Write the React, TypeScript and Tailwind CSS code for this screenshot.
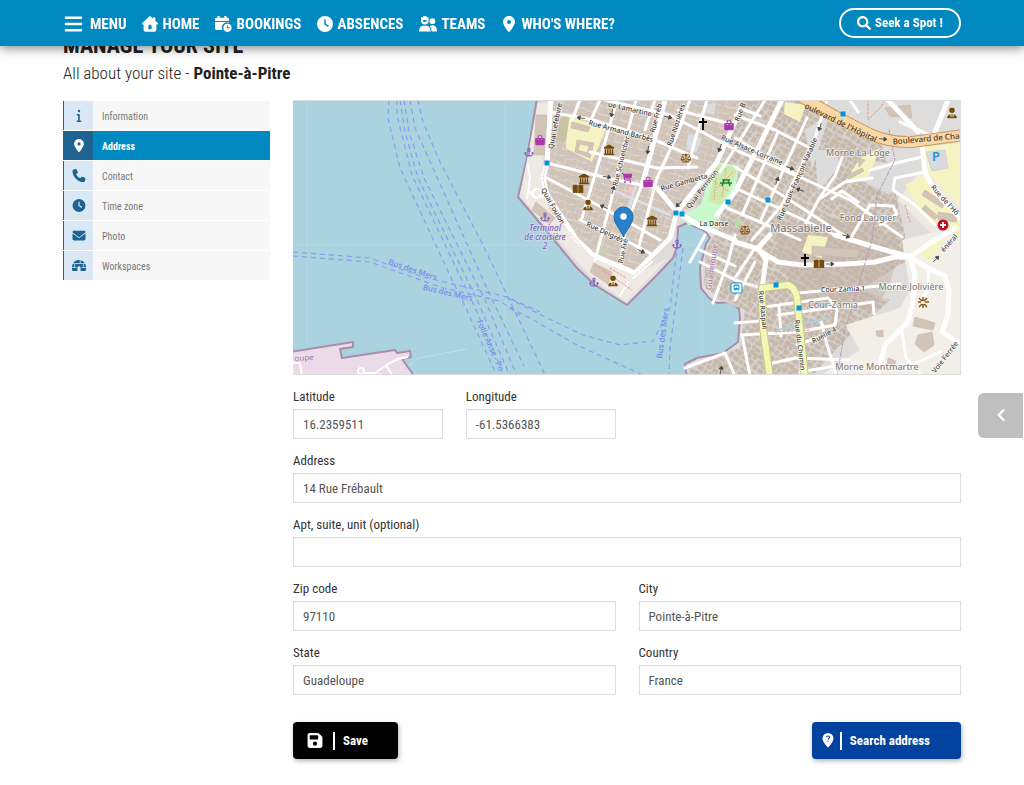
import React, { useState } from 'react'
import type { IconType } from 'react-icons'
import { FaChevronLeft, FaSearch } from 'react-icons/fa'
import {
  FaAnchor,
  FaBagShopping,
  FaBars,
  FaBookOpen,
  FaBus,
  FaCartShopping,
  FaClock,
  FaEnvelope,
  FaFloppyDisk,
  FaIgloo,
  FaInfo,
  FaLandmark,
  FaLocationDot,
  FaPhone,
  FaScaleBalanced,
  FaUserTie,
} from 'react-icons/fa6'

// ---------- custom icons ----------

const HomeIcon = () => (
  <svg viewBox="0 0 16 16" className="h-4 w-4" fill="currentColor" fillRule="evenodd">
    <path d="M7.3.4a1 1 0 0 1 1.4 0L11 2.500V1.500h2.400v3.200l2.300 2.200c.6.600.2 1.700-.7 1.700h-.6v5.400a1.800 1.800 0 0 1-1.800 1.800H3.400A1.800 1.800 0 0 1 1.600 14V8.600H1c-.9 0-1.300-1.100-.7-1.700zM6.400 13.200h3.200V10.200a1.600 1.600 0 0 0-3.200 0z" />
  </svg>
)

const BookingIcon = () => (
  <svg viewBox="0 0 17 16" className="h-4 w-[17px]" fill="currentColor">
    <path d="M2.500 0h2.200v1.800h4.600V0h2.200v1.800H13a1 1 0 0 1 1 1V5H0V2.800a1 1 0 0 1 1-1h1.500z" />
    <path d="M0 6h14v.9a5 5 0 0 0-6.400 7.100H1.500A1.500 1.500 0 0 1 0 12.500z" />
    <path
      fillRule="evenodd"
      d="M12.500 7.700a4.100 4.100 0 1 1 0 8.200 4.100 4.100 0 0 1 0-8.200zM12 9.400v2.900h2.800v-1H13V9.400z"
    />
  </svg>
)

const TeamsIcon = () => (
  <svg viewBox="0 0 18 16" className="h-4 w-[18px]" fill="currentColor">
    <path d="M2 1l1.200.5L4.500 0h2.600l1.300 1.500L9.600 1v3.800a3.800 3.800 0 0 1-7.600 0z" />
    <path d="M3.800 4h4a2 2 0 0 1-4 0z" fill="#0088c0" />
    <path d="M0 15.500c0-3.600 2-5.700 4-5.700h3.600c2.200 0 4 2.100 4 5.700z" />
    <circle cx="13.400" cy="5.200" r="2.900" />
    <path d="M12.600 15.500c0-2.600-.6-4.200-1.700-5.300.7-.7 1.600-.9 2.600-.9 2.700 0 4.500 2 4.500 6.200z" />
  </svg>
)

const SearchPinIcon = () => (
  <svg viewBox="0 0 12 16" className="h-[15px] w-3" fill="none">
    <path d="M6 0a5.800 5.800 0 0 1 5.800 5.800C11.800 9.300 8 13.500 6 15.500 4 13.500.2 9.300.2 5.800A5.800 5.800 0 0 1 6 0z" fill="#fff" />
    <path d="M4.400 4.600c0-1 .7-1.500 1.600-1.500s1.700.5 1.700 1.500c0 1.100-1.600 1.200-1.600 2.500M6.100 8.300v1" stroke="#00429d" strokeWidth="1.100" />
  </svg>
)

// ---------- data ----------

const navItems = [
  { label: 'HOME', icon: <HomeIcon /> },
  { label: 'BOOKINGS', icon: <BookingIcon /> },
  { label: 'ABSENCES', icon: <FaClock className="h-4 w-4" /> },
  { label: 'TEAMS', icon: <TeamsIcon /> },
  { label: "WHO'S WHERE?", icon: <FaLocationDot className="h-4 w-4" /> },
]

const sections: { label: string; icon: IconType }[] = [
  { label: 'Information', icon: FaInfo },
  { label: 'Address', icon: FaLocationDot },
  { label: 'Contact', icon: FaPhone },
  { label: 'Time zone', icon: FaClock },
  { label: 'Photo', icon: FaEnvelope },
  { label: 'Workspaces', icon: FaIgloo },
]

const ferryLines = [
  'M389 100L388 118L400 168L453 282L463 302L497 376',
  'M397 100L397 115L412 175L450 255L477 312L504 376',
  'M400 100L405 132L418 178L477 300L510 376',
  'M404 100L409 132L424 178L485 300L517 376',
  'M410 100L415 128L457 222L490 295L524 366',
  'M418 100L423 122L440 162L483 245L507 295L520 322L545 375',
  'M293 252L370 258L423 277L507 297L540 312',
  'M293 256L370 262L440 287L500 301L520 315',
  'M508 298L545 317L583 335L620 345L653 341L670 308L677 247',
  'M510 307L577 345L645 376',
  'M683 248L675 310L670 348L669 376',
]

const wideRoads = [
  'M551 100L547 163L543 178L547 195L577 240L593 255L635 273L670 238L677 212L657 188L643 182',
  'M665 100L643 182',
  'M782 100L758 148L735 192L717 215',
  'M741 108L717 162L677 212',
  'M735 242L755 248L778 262L802 265L845 264L875 262L895 257L910 257',
  'M835 235L878 248L910 257L932 242L955 228',
  'M922 145L925 172L935 192L962 220',
  'M888 100L918 132',
  'M948 100L935 132',
  'M910 257L915 275L913 302L908 322L885 345L877 376',
  'M910 257L928 268L945 276L949 290L948 315L942 332L962 345',
  'M762 288L766 260L758 248L770 235',
  'M677 212L700 226L735 240',
]

const roads = [
  'M617 100L607 135L582 218',
  'M636 100L620 162L610 205L595 260',
  'M643 182L625 228L620 268',
  'M690 100L677 135L657 178L638 250',
  'M707 100L695 140L688 168',
  'M580 100L572 120',
  'M600 100L590 122',
  'M550 112L593 120L650 138L697 158',
  'M605 100L670 115L717 140L740 152L802 178',
  'M547 163L607 178L657 188',
  'M590 152L657 168L697 167',
  'M547 178L603 208L660 240',
  'M580 220L625 240L653 255',
  'M655 100L645 130',
  'M678 110L730 124',
  'M765 100L740 140L720 172',
  'M827 100L815 138L782 205L752 240',
  'M807 118L787 162L760 222',
  'M778 132L742 215',
  'M735 115L775 130L808 147',
  'M735 138L802 178L850 200L902 237',
  'M735 167L782 195L848 238',
  'M735 188L770 204L835 235',
  'M727 208L760 222L800 240',
  'M820 197L835 176L842 158',
  'M821 198L845 182L872 178',
  'M832 199L842 191L858 202',
  'M852 236L870 205L893 206L897 214L880 225',
  'M820 197L805 225',
  'M922 157L900 162L870 170',
  'M925 172L895 178L893 190L915 205L935 225',
  'M700 262L735 280L762 288',
  'M735 278L755 248',
  'M735 300L755 262',
  'M765 307L828 298',
  'M778 315L873 302L874 314',
  'M798 293L868 287L900 284',
  'M742 335L798 332L835 325L837 310L830 300',
  'M779 307L781 336',
  'M797 345L822 336',
  'M821 320L827 345L837 376',
  'M742 335L750 376',
  'M735 323L760 321',
  'M765 365L795 358L850 360',
  'M800 372L835 366',
  'M902 332L906 358L922 376',
  'M910 366L940 352',
  'M928 268L929 290L920 300',
  'M685 368L725 353L735 376',
  'M713 303L728 262L735 235',
  'M705 235L690 262',
  'M700 250L735 266',
  'M740 108L760 116',
  'M900 122L930 135',
  'M850 100L858 112',
]

const labelKinds = {
  street: { fontSize: 7, fill: '#3f3c3a', stroke: '#fff' },
  major: { fontSize: 8, fill: '#4a3a26', stroke: '#fcd6a4' },
  place: { fontSize: 9, fill: '#85817e', stroke: '#fff' },
  suburb: { fontSize: 11, fill: '#85817e', stroke: '#fff' },
  ferry: { fontSize: 8, fill: '#7687ee', stroke: '#aad3df' },
  harbour: { fontSize: 8, fill: '#8461c4', stroke: '#dfe5ea' },
  region: { fontSize: 8, fill: '#a884ac', stroke: '#f2e8f0' },
}

const labels: { text: string; x: number; y: number; rotate: number; kind: keyof typeof labelKinds }[] = [
  { text: 'Quai Lefebvre', x: 555, y: 126, rotate: -79, kind: 'street' },
  { text: 'Rue Armand Barbès', x: 621, y: 131, rotate: 15, kind: 'street' },
  { text: 'ue Lamartine', x: 630, y: 109, rotate: 13, kind: 'street' },
  { text: 'Rue Schoelcher', x: 621, y: 161, rotate: -76, kind: 'street' },
  { text: 'Rue Fréb', x: 656, y: 118, rotate: -75, kind: 'street' },
  { text: 'Rue Nozières', x: 676, y: 125, rotate: -72, kind: 'street' },
  { text: 'Rue Gambetta', x: 684, y: 182, rotate: -16, kind: 'street' },
  { text: 'Quai Perrinon', x: 702, y: 189, rotate: -52, kind: 'street' },
  { text: 'Quai Foulon', x: 553, y: 206, rotate: 60, kind: 'street' },
  { text: 'Rue Delgrès', x: 605, y: 232, rotate: 25, kind: 'street' },
  { text: 'Rue Fré', x: 623, y: 251, rotate: -78, kind: 'street' },
  { text: 'La Darse', x: 714, y: 223, rotate: 0, kind: 'street' },
  { text: 'Rue Alsace-Lorraine', x: 752, y: 150, rotate: 23, kind: 'street' },
  { text: 'Rue Louis-François Vatable', x: 797, y: 179, rotate: -66, kind: 'street' },
  { text: "oulevard de l'Hôpital", x: 841, y: 122, rotate: 26, kind: 'major' },
  { text: 'Boulevard de Cha', x: 926, y: 138, rotate: -5, kind: 'major' },
  { text: "Rue de l'Hô", x: 945, y: 200, rotate: 48, kind: 'street' },
  { text: 'Rue Raspail', x: 763, y: 310, rotate: 84, kind: 'street' },
  { text: 'Rue du Chemin', x: 800, y: 345, rotate: 83, kind: 'street' },
  { text: 'Cour Zamia 1', x: 843, y: 289, rotate: -2, kind: 'street' },
  { text: 'Ruelle 4', x: 824, y: 335, rotate: -28, kind: 'street' },
  { text: 'Voie Ferrée', x: 945, y: 357, rotate: -52, kind: 'street' },
  { text: 'Rue B', x: 740, y: 112, rotate: -68, kind: 'street' },
  { text: 'énéral', x: 949, y: 243, rotate: -48, kind: 'street' },
  { text: 'Morne La Loge', x: 858, y: 152, rotate: 0, kind: 'place' },
  { text: 'Fond Laugier', x: 868, y: 217, rotate: 0, kind: 'place' },
  { text: 'Massabielle', x: 801, y: 227, rotate: 0, kind: 'suburb' },
  { text: 'Morne Jolivière', x: 911, y: 286, rotate: 0, kind: 'place' },
  { text: 'Cour-Zamia', x: 833, y: 304, rotate: 0, kind: 'place' },
  { text: 'Morne Montmartre', x: 877, y: 366, rotate: 0, kind: 'place' },
  { text: 'Bus des Mers', x: 413, y: 269, rotate: 19, kind: 'ferry' },
  { text: 'Bus des Mers', x: 448, y: 292, rotate: 13, kind: 'ferry' },
  { text: 'Folle Anse - Po', x: 491, y: 345, rotate: 66, kind: 'ferry' },
  { text: 'Bus des Mers', x: 662, y: 333, rotate: -82, kind: 'ferry' },
  { text: 'Terminal', x: 545, y: 227, rotate: 0, kind: 'harbour' },
  { text: 'de croisière', x: 545, y: 236, rotate: 0, kind: 'harbour' },
  { text: '2', x: 545, y: 245, rotate: 0, kind: 'harbour' },
  { text: 'Guadeloupe', x: 711, y: 267, rotate: -82, kind: 'region' },
  { text: 'oupe', x: 304, y: 357, rotate: -4, kind: 'region' },
]

const pois: { icon: IconType; x: number; y: number; size: number; color: string }[] = [
  { icon: FaBagShopping, x: 540, y: 140, size: 11, color: '#ac39ac' },
  { icon: FaBagShopping, x: 729, y: 125, size: 11, color: '#ac39ac' },
  { icon: FaBagShopping, x: 648, y: 182, size: 11, color: '#ac39ac' },
  { icon: FaCartShopping, x: 627, y: 178, size: 11, color: '#ac39ac' },
  { icon: FaAnchor, x: 529, y: 152, size: 10, color: '#8461c4' },
  { icon: FaAnchor, x: 545, y: 217, size: 10, color: '#8461c4' },
  { icon: FaAnchor, x: 594, y: 282, size: 10, color: '#8461c4' },
  { icon: FaAnchor, x: 677, y: 244, size: 10, color: '#8461c4' },
  { icon: FaLandmark, x: 609, y: 150, size: 11, color: '#734a08' },
  { icon: FaLandmark, x: 584, y: 179, size: 11, color: '#734a08' },
  { icon: FaLandmark, x: 652, y: 221, size: 11, color: '#734a08' },
  { icon: FaBookOpen, x: 578, y: 189, size: 11, color: '#734a08' },
  { icon: FaBookOpen, x: 819, y: 264, size: 11, color: '#734a08' },
  { icon: FaUserTie, x: 588, y: 205, size: 11, color: '#734a08' },
  { icon: FaUserTie, x: 613, y: 281, size: 11, color: '#734a08' },
  { icon: FaUserTie, x: 952, y: 113, size: 11, color: '#734a08' },
  { icon: FaScaleBalanced, x: 686, y: 158, size: 11, color: '#8a5a14' },
  { icon: FaScaleBalanced, x: 745, y: 230, size: 11, color: '#8a5a14' },
]

const churches = [
  [703, 124],
  [805, 260],
]

const stops = [
  [547, 163],
  [676, 213],
  [682, 214],
  [728, 202],
  [843, 114],
  [768, 200],
  [776, 285],
  [799, 308],
]

const arrows = [
  [581, 118, 188],
  [612, 113, 100],
  [607, 177, 8],
  [613, 190, -75],
  [604, 207, 205],
  [648, 150, 98],
  [668, 117, 12],
  [720, 148, 110],
  [679, 204, 140],
  [641, 251, 25],
  [820, 127, 110],
  [790, 168, 20],
  [777, 181, -70],
  [800, 190, 200],
  [846, 236, 20],
  [830, 264, 0],
  [936, 259, -45],
  [883, 139, 5],
  [721, 370, -80],
]

const landPath =
  'M537 98L527 158L518 197L550 235L577 268L595 285L627 305L657 275L673 258L677 247L678 227L687 223L705 231L710 238L706 244L700 268L701 288L709 298L717 303L732 302L739 309L740 318L738 342L723 353L697 358L685 364L687 378H964V98Z'
const southPath = 'M290 352L353 342L353 347L340 349L342 358L395 350L397 353L410 351L411 357L402 359L415 377H290Z'

// ---------- map ----------

function SiteMap() {
  return (
    <svg
      viewBox="293 101 667 273"
      className="block w-full border-y border-r border-[#dddddd]"
      role="img"
      aria-label="Map of Pointe-à-Pitre"
      fontFamily='"Noto Sans", sans-serif'
    >
      <defs>
        <pattern id="blocks" width="24" height="22" patternUnits="userSpaceOnUse" patternTransform="rotate(17)">
          <rect width="24" height="22" fill="#ddd5ce" />
          <path
            d="M0 0h5v6H0zM6 1h4v4H6zM11 0h6v7h-6zM18 1h5v4h-5zM1 8h6v4H1zM8 7h3v6H8zM13 9h5v4h-5zM19 7h4v6h-4zM0 14h4v7H0zM6 15h6v5H6zM13 14h4v6h-4zM18 15h5v6h-5z"
            fill="#d3c6bb"
            stroke="#c3b4a8"
            strokeWidth=".5"
          />
        </pattern>
        <pattern id="houses" width="27" height="25" patternUnits="userSpaceOnUse" patternTransform="rotate(28)">
          <rect width="27" height="25" fill="#d8d1cb" />
          <path
            d="M1 1h4v3H1zM6 0h3v5H6zM10 2h5v4h-5zM17 1h3v3h-3zM21 2h5v3h-5zM0 6h5v4H0zM7 7h4v3H7zM12 8h3v5h-3zM17 6h5v4h-5zM23 7h3v6h-3zM2 12h4v3H2zM7 12h4v5H7zM13 15h5v3h-5zM17 11h4v3h-4zM20 15h5v4h-5zM0 17h4v5H0zM6 19h5v4H6zM13 20h3v4h-3zM18 21h6v3h-6z"
            fill="#c8b9ad"
            stroke="#c0b0a4"
            strokeWidth=".6"
          />
        </pattern>
      </defs>

      <path d="M293 100h668v275H293z" fill="#aad3df" />
      <path d="M307 100V376M505 100V376M702 100V376M293 245H961" stroke="#b9dce6" strokeWidth=".7" />

      {/* land */}
      <path d={landPath} fill="#dfdddc" stroke="#a98dad" strokeWidth="2" strokeLinejoin="round" />
      <path d="M552 100L548 163L545 185L577 240L593 255L635 272L673 235L680 212L735 192L735 230L820 260V100Z" fill="url(#blocks)" />
      <path d="M538 103L520 196L552 233L595 281L627 302L668 258L635 275L590 256L550 210L541 180L549 103Z" fill="#eeeae3" />
      <path d="M735 100H805L882 145L895 190L905 235V262L860 290L890 300L868 320L845 340L812 376H690L688 366L740 348L745 310L720 300L704 285L706 250L720 225Z" fill="url(#houses)" />
      <path d="M775 225L850 218L900 240L890 285L875 310L800 300L780 262Z" fill="#c3b3a7" opacity=".5" />
      <path d="M805 130L830 113L812 170Z" fill="#dddcdc" />
      <path d="M815 150L835 150L840 165L818 192Z" fill="#dddcdc" />
      <path d="M868 160L900 165L890 195L860 180Z" fill="#dddcdc" />
      <path d="M902 240L961 225V376H820L860 350L845 325L900 308L910 290Z" fill="#f2efe9" />
      <path d="M898 200L925 165L961 190V235L930 232Z" fill="#efebe0" />

      {/* schools, hospital ground and parks */}
      <g fill="#f6f3c3">
        <path d="M565 116L607 127L592 162L566 148Z" />
        <path d="M922 147L960 143V205L930 175Z" />
        <path d="M905 185L925 175L960 220V240L925 215Z" />
        <path d="M860 158L880 148L868 178L845 182Z" />
        <path d="M785 102L806 105L800 122L784 114Z" />
        <path d="M808 235L828 237L822 258L802 252Z" />
        <path d="M912 250L945 238L930 262Z" />
      </g>
      <g fill="#d3c4b8" stroke="#c0aea1" strokeWidth=".5">
        <path d="M572 122L590 127L588 132L571 128Z" />
        <path d="M577 140L594 143L590 158L575 152ZM580 144L578 150L587 153L589 146Z" fillRule="evenodd" />
        <path d="M846 176L862 168L864 171L849 179Z" />
        <path d="M858 158L865 160L859 167Z" />
        <path d="M925 190L945 203L942 208L922 195Z" />
        <path d="M938 212L958 215L956 222L938 220Z" />
        <path d="M925 205L938 216L935 220L922 209Z" />
        <path d="M885 108L910 105L912 118L890 116Z" />
        <path d="M915 317L935 323L933 330L913 326Z" />
        <path d="M918 335L932 332L934 345L924 352L915 344Z" />
        <path d="M888 358L896 361L894 367L887 364ZM876 331L883 330L883 337L877 336Z" />
        <path d="M812 246L860 250L858 258L812 255Z" />
        <path d="M536 115H547L546 155H534Z" />
        <path d="M536 202L555 218L550 224L532 210Z" />
        <path d="M594 263L612 272L608 284L590 272Z" />
      </g>
      <path d="M560 120L570 113L566 142L556 140Z" fill="#c5c3a4" />
      <path d="M688 134L702 138L697 152L686 150Z" fill="#dcdce6" />
      <path d="M707 104L716 103L714 115L705 113Z" fill="#dcdcdc" />
      <path d="M926 152L945 150L948 168L932 171Z" fill="#d8dadf" stroke="#c5c8d2" strokeWidth=".6" />
      <path d="M717 162L739 166L735 190L722 212L712 227L688 225L682 216L700 206L708 183Z" fill="#c8facc" />
      <path d="M717 164L738 168L722 205L708 202Z" fill="#cdebb0" />
      <path d="M717 168L714 200M726 168L722 198M733 172L713 192M712 180L730 192" stroke="#f3a08d" strokeWidth="1" strokeDasharray="2 1" />
      <path d="M735 218L741 220L738 228H735Z" fill="#b8dfa2" />
      <path d="M629 186L636 188L633 196L628 194Z" fill="#f6c6bd" />
      <path d="M593 248L605 248L608 255L598 253Z" fill="#cdcfb3" />

      {/* streets */}
      <g fill="none" strokeLinejoin="round" strokeLinecap="round">
        <path d="M613 190L670 215M637 182L628 212" stroke="#dddde8" strokeWidth="3" />
        {roads.map(d => (
          <path key={d} d={d} stroke="#fff" strokeWidth="3" />
        ))}
        {wideRoads.map(d => (
          <path key={d} d={d} stroke="#fff" strokeWidth="5" />
        ))}
        <path d="M528 190L535 198L545 196M527 198L530 178L528 165M633 278L652 262M620 296L628 282" stroke="#fff" strokeWidth="2" />
        <circle cx="537" cy="193" r="4" stroke="#fff" strokeWidth="2" />
        <path d="M547 160L543 178L550 210L590 256M668 245L635 275M735 278L762 288M765 305L770 376" stroke="#e0aaa0" strokeWidth=".6" strokeDasharray="2 2" />
        <path d="M595 265L632 290M610 268L626 278M775 332L810 330M905 205L910 222M868 100L868 120L880 108L884 102" stroke="#fa8c7d" strokeWidth="1" strokeDasharray="2 2" />
        <path d="M778 330L828 318" stroke="#aad3df" strokeWidth="2" />
        <path d="M889 130L895 160L877 195L872 240L845 330L837 376" stroke="#b79cbb" strokeWidth="1" strokeDasharray="5 2 2 2" />
        <path d="M762 288L788 285Q795 287 797 298L805 378M762 288L763 328L770 378" stroke="#c5ca86" strokeWidth="8" />
        <path d="M762 288L788 285Q795 287 797 298L805 378M762 288L763 328L770 378" stroke="#f3f7b4" strokeWidth="6" />
        <path d="M800 96L835 116L870 134Q890 143 912 142L964 135" stroke="#c69a63" strokeWidth="12" />
        <path d="M800 96L835 116L870 134Q890 143 912 142L964 135" stroke="#fcd6a4" strokeWidth="10" />
      </g>

      {/* southern shore */}
      <path d={southPath} fill="#ebdbe8" stroke="#a98dad" strokeWidth="2" strokeLinejoin="round" />
      <g fill="none" stroke="#fff" strokeWidth="2">
        <circle cx="361" cy="371" r="3" />
        <path d="M364 373L375 373L388 364L398 359L408 357M386 365L393 376M293 363H300L302 376M378 374L384 376" />
      </g>
      <path d="M408 366L419 358L467 349" fill="none" stroke="#c5dde2" strokeWidth="1.200" />

      {/* ferry routes */}
      <g fill="none" stroke="#8a9cf0" strokeWidth="1.200" strokeDasharray="5 4">
        {ferryLines.map(d => (
          <path key={d} d={d} />
        ))}
      </g>

      {arrows.map(([x, y, angle]) => (
        <path
          key={`${x}-${y}`}
          d="M-4 0H2M1 -2L4 0L1 2Z"
          transform={`translate(${x} ${y}) rotate(${angle})`}
          stroke="#444"
          strokeWidth=".8"
          fill="#444"
        />
      ))}

      {stops.map(([x, y]) => (
        <rect key={`${x}-${y}`} x={x - 2.5} y={y - 2.5} width="5" height="5" fill="#0092da" />
      ))}

      {labels.map((label, index) => {
        const kind = labelKinds[label.kind]
        return (
          <text
            key={index}
            transform={`translate(${label.x} ${label.y}) rotate(${label.rotate})`}
            textAnchor="middle"
            dominantBaseline="central"
            fontSize={kind.fontSize}
            fontWeight={500}
            fill={kind.fill}
            stroke={kind.stroke}
            strokeWidth="1.500"
            strokeOpacity=".7"
            paintOrder="stroke"
            fontStyle={label.kind === 'harbour' ? 'italic' : 'normal'}
          >
            {label.text}
          </text>
        )
      })}

      {pois.map(({ icon: Icon, x, y, size, color }) => (
        <Icon key={`${x}-${y}`} x={x - size / 2} y={y - size / 2} size={size} color={color} />
      ))}

      {churches.map(([x, y]) => (
        <path key={x} d={`M${x} ${y - 6}V${y + 6}M${x - 4} ${y - 2}H${x + 4}`} stroke="#000" strokeWidth="1.800" />
      ))}

      {/* picnic table, bus station, parking, hospital, viewpoint */}
      <path d="M722 180H730M724 180L722 186M728 180L730 186M720 183H732" stroke="#1b8a34" strokeWidth="1.500" />
      <rect x="731" y="283" width="11" height="10" rx="1" fill="#fff" stroke="#0092da" />
      <FaBus x={733} y={284} size={7} color="#0092da" />
      <text x="932" y="161" fontSize="13" fontWeight="600" fill="#2a93d5">
        P
      </text>
      <circle cx="943" cy="225" r="5.500" fill="#bf0f2b" />
      <path d="M943 222V228M940 225H946" stroke="#fff" strokeWidth="1.800" />
      <path
        d="M923 297V301M923 304V308M918 302H921M925 302H929M919 298L922 301M927 298L924 301M919 307L922 304M927 307L924 304"
        stroke="#8a5a14"
        strokeWidth="1.500"
      />

      {/* site marker */}
      <path d="M623.500 237C621 230 614 224 614 216.500A9.500 9.500 0 0 1 633 216.500C633 224 626 230 623.500 237Z" fill="#2a81cb" stroke="#1f6aac" />
      <circle cx="623.500" cy="216.500" r="3.200" fill="#fff" />
    </svg>
  )
}

// ---------- form ----------

interface FieldProps {
  id: string
  label: string
  defaultValue?: string
  className: string
}

function Field({ id, label, defaultValue = '', className }: FieldProps) {
  return (
    <div className={className}>
      <label htmlFor={id} className="block text-[13px] leading-6 text-[#333333]">
        {label}
      </label>
      <input
        id={id}
        type="text"
        defaultValue={defaultValue}
        className="block h-[30px] w-full border border-[#dddddd] bg-white px-[9px] text-[13px] text-[#555555] shadow-[inset_0_1px_1px_rgba(0,0,0,0.05)] outline-none focus:border-[#0088c0]"
      />
    </div>
  )
}

export default function App() {
  const [active, setActive] = useState('Address')

  return (
    <div className="min-h-screen bg-white font-['Roboto_Condensed',Roboto,sans-serif] text-[#222222]">
      <header className="fixed inset-x-0 top-0 z-20 flex h-[46px] items-center bg-[#0088c0] px-[63px] text-white shadow-[0_2px_10px_rgba(0,0,0,0.5)]">
        <nav className="flex items-center gap-4 pt-0.5 text-[15px] font-bold">
          <button type="button" className="flex items-center gap-1.5 font-bold">
            <FaBars className="h-5 w-[21px]" />
            MENU
          </button>
          {navItems.map(item => (
            <a key={item.label} href="#" className="flex items-center gap-1">
              {item.icon}
              {item.label}
            </a>
          ))}
        </nav>
        <button
          type="button"
          className="ml-auto flex h-[30px] items-center gap-1 rounded-full border-2 border-white px-4 text-[13px] font-bold"
        >
          <FaSearch className="h-3.5 w-3.5" />
          Seek a Spot !
        </button>
      </header>

      <main className="px-[63px] pt-8 pb-6">
        <h1 className="text-[22px] leading-7 font-bold">MANAGE YOUR SITE</h1>
        <p className="mt-[3px] text-[17px] leading-5 font-light">
          All about your site - <strong className="font-bold">Pointe-à-Pitre</strong>
        </p>

        <div className="mt-[17px] grid grid-cols-[207px_1fr] items-start gap-[23px]">
          <ul className="flex flex-col pt-px">
            {sections.map(({ label, icon: Icon }) => {
              const isActive = active === label

              return (
                <li key={label} className="h-[30px] border-b border-white">
                  <a
                    href="#"
                    onClick={() => setActive(label)}
                    className={`flex h-full items-center border-l border-[#1f6391] text-[10px] ${
                      isActive ? 'bg-[#0088c0] font-bold text-white' : 'bg-[#f7f7f7] text-[#777777]'
                    }`}
                  >
                    <span
                      className={`flex h-full w-[29px] items-center justify-center ${
                        isActive ? 'bg-[#1f6391] text-white' : 'bg-[#dae8f6] text-[#1f6391]'
                      }`}
                    >
                      <Icon className="h-[13px] w-3.5" />
                    </span>
                    <span className="pt-0.5 pl-[9px]">{label}</span>
                  </a>
                </li>
              )
            })}
          </ul>

          <div>
            <SiteMap />

            <form onSubmit={event => event.preventDefault()}>
              <div className="mt-2.5 grid grid-cols-4 gap-x-[23px] gap-y-2.5">
                <Field id="latitude" label="Latitude" defaultValue="16.2359511" className="col-span-1" />
                <Field id="longitude" label="Longitude" defaultValue="-61.5366383" className="col-span-1" />
                <Field id="address" label="Address" defaultValue="14 Rue Frébault" className="col-span-4" />
                <Field id="apt" label="Apt, suite, unit (optional)" className="col-span-4" />
                <Field id="zip" label="Zip code" defaultValue="97110" className="col-span-2" />
                <Field id="city" label="City" defaultValue="Pointe-à-Pitre" className="col-span-2" />
                <Field id="state" label="State" defaultValue="Guadeloupe" className="col-span-2" />
                <Field id="country" label="Country" defaultValue="France" className="col-span-2" />
              </div>

              <div className="mt-[27px] flex justify-between text-[13px] font-bold text-white">
                <button
                  type="submit"
                  className="flex h-[37px] items-center rounded bg-black pr-[30px] pl-3.5 shadow-[1px_2px_5px_rgba(0,0,0,0.3)]"
                >
                  <FaFloppyDisk className="h-[17px] w-4" />
                  <span className="mr-2 ml-2.5 h-[18px] w-0.5 bg-white" />
                  Save
                </button>
                <button
                  type="button"
                  className="flex h-[37px] items-center rounded bg-[#00429d] pr-[31px] pl-2.5 shadow-[1px_2px_5px_rgba(0,0,0,0.3)]"
                >
                  <SearchPinIcon />
                  <span className="mr-2 ml-1.5 h-[18px] w-0.5 bg-white" />
                  Search address
                </button>
              </div>
            </form>
          </div>
        </div>
      </main>

      <button
        type="button"
        aria-label="Open panel"
        className="fixed top-1/2 right-px z-10 flex h-[45px] w-[45px] items-center justify-center rounded-l-md bg-[#bfbfbf] text-white"
      >
        <FaChevronLeft className="h-3.5 w-3.5" />
      </button>
    </div>
  )
}
